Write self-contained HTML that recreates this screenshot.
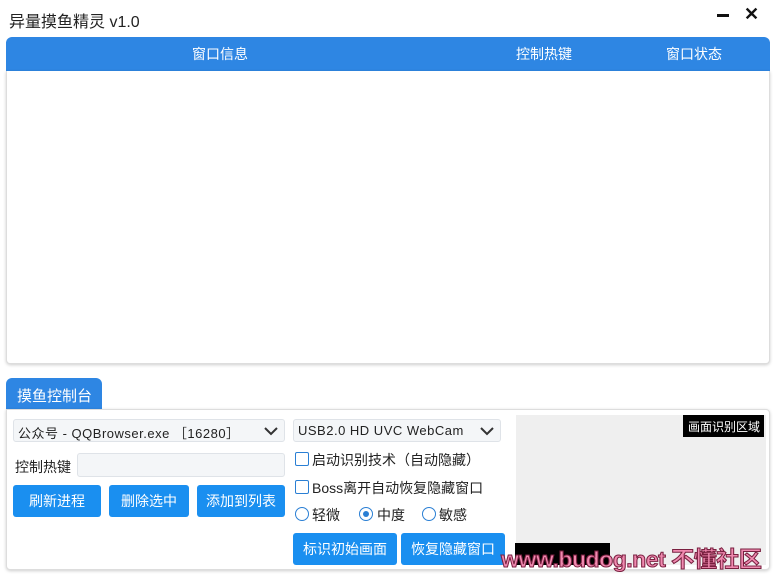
<!DOCTYPE html>
<html><head><meta charset="utf-8"><style>
*{margin:0;padding:0;box-sizing:border-box}
body{width:775px;height:578px;background:#fff;position:relative;overflow:hidden;font-family:"Liberation Sans","Noto Sans CJK SC",sans-serif;color:#222}
.a{position:absolute}
.title{left:9px;top:8px;font-size:16px;color:#222}
.hdr{left:6px;top:37px;width:764px;height:34px;background:#2e86e3;border-radius:6px 6px 0 0;color:#fff;font-size:14px}
.hdr span{position:absolute;top:7px}
.body1{left:6px;top:71px;width:764px;height:293px;background:#fff;border:1px solid #ddd;border-top:none;border-radius:0 0 4px 4px;box-shadow:0 1px 3px rgba(0,0,0,.2)}
.tab{left:6px;top:378px;width:96px;height:32px;background:#2e86e3;border-radius:6px 6px 0 0;color:#fff;font-size:15px;padding:7px 0 0 11px}
.panel{left:6px;top:409px;width:764px;height:161px;border:1px solid #ddd;border-radius:0 4px 4px 4px;box-shadow:0 1px 3px rgba(0,0,0,.2);background:#fff}
.sel{height:23px;background:#f4f6f8;border:1px solid #dfe3e8;border-radius:3px;font-size:13px;padding:3px 0 0 4px;letter-spacing:.5px}
.sel svg{position:absolute;right:6px;top:7px}
.btn{background:#1a8ff0;color:#fff;font-size:14px;text-align:center;border-radius:3px;height:32px;line-height:32px}
.cb{width:14px;height:14px;border:1.5px solid #2a7fd4;border-radius:2px;display:inline-block}
.lbl{font-size:14px}
.rd{width:14px;height:14px;border:1.5px solid #2a7fd4;border-radius:50%;display:inline-block;position:absolute}
</style></head><body>
<div class="a title">异量摸鱼精灵 v1.0</div>
<div class="a" style="left:717px;top:14px;width:12px;height:2.5px;background:#111"></div>
<div class="a" style="left:744px;top:4px;font-size:18px;font-weight:bold;color:#111">✕</div>
<div class="a hdr"><span style="left:186px">窗口信息</span><span style="left:510px">控制热键</span><span style="left:660px">窗口状态</span></div>
<div class="a body1"></div>
<div class="a tab">摸鱼控制台</div>
<div class="a panel"></div>
<div class="a sel" style="left:13px;top:419px;width:272px">公众号 - QQBrowser.exe ［16280］<svg width="14" height="9"><path d="M1 1l6 6 6-6" stroke="#333" stroke-width="2" fill="none"/></svg></div>
<div class="a lbl" style="left:15px;top:457px">控制热键</div>
<div class="a" style="left:77px;top:453px;width:208px;height:24px;background:#f4f6f8;border:1px solid #dfe3e8;border-radius:3px"></div>
<div class="a btn" style="left:13px;top:485px;width:88px">刷新进程</div>
<div class="a btn" style="left:109px;top:485px;width:80px">删除选中</div>
<div class="a btn" style="left:197px;top:485px;width:88px">添加到列表</div>
<div class="a sel" style="left:293px;top:419px;width:208px">USB2.0 HD UVC WebCam<svg width="14" height="9"><path d="M1 1l6 6 6-6" stroke="#333" stroke-width="2" fill="none"/></svg></div>
<div class="a cb" style="left:295px;top:452px"></div><div class="a lbl" style="left:312px;top:450px">启动识别技术（自动隐藏）</div>
<div class="a cb" style="left:295px;top:480px"></div><div class="a lbl" style="left:312px;top:478px">Boss离开自动恢复隐藏窗口</div>
<div class="a rd" style="left:295px;top:507px"></div><div class="a lbl" style="left:312px;top:505px">轻微</div>
<div class="a rd" style="left:359px;top:507px"></div><div class="a" style="left:363px;top:511px;width:6px;height:6px;border-radius:50%;background:#2a7fd4"></div><div class="a lbl" style="left:377px;top:505px">中度</div>
<div class="a rd" style="left:422px;top:507px"></div><div class="a lbl" style="left:439px;top:505px">敏感</div>
<div class="a btn" style="left:293px;top:533px;width:104px">标识初始画面</div>
<div class="a btn" style="left:401px;top:533px;width:104px">恢复隐藏窗口</div>
<div class="a" style="left:516px;top:415px;width:250px;height:150px;background:#efefef"></div>
<div class="a" style="left:683px;top:415px;width:81px;height:22px;background:#000;color:#fff;font-size:12px;padding:3px 0 0 5px">画面识别区域</div>
<div class="a" style="left:515px;top:543px;width:95px;height:22px;background:#000"></div>
<div class="a" style="left:501px;top:542px;font-size:22px;font-weight:bold;color:#f08ab0;letter-spacing:-.5px;-webkit-text-stroke:1px #7a2040;transform-origin:0 0;transform:scaleX(1.05);white-space:nowrap">www.budog.net 不懂社区</div>
</body></html>
